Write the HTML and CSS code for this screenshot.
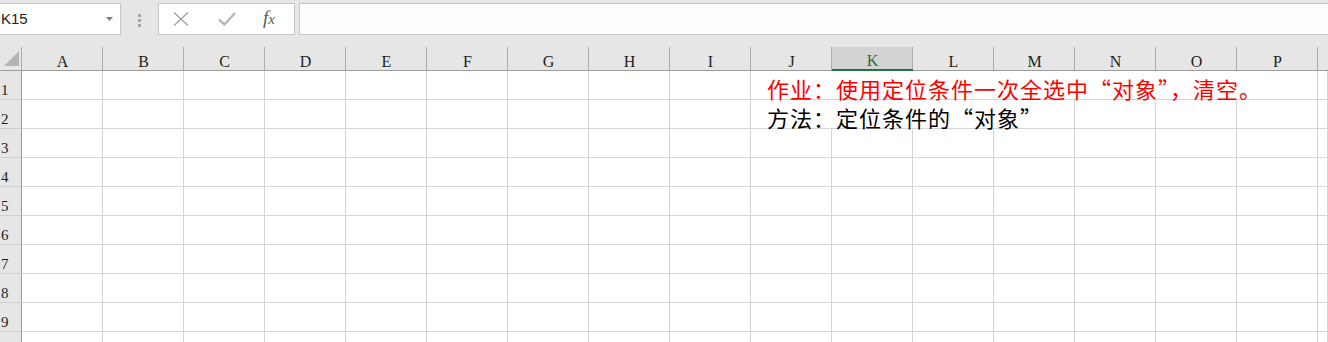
FILE: index.html
```html
<!DOCTYPE html>
<html lang="zh-CN">
<head>
    <meta charset="UTF-8">
    <title>Sheet1</title>
    <link rel="stylesheet" href="styles.css">
</head>
<body>
    <div class="toolbar">
        <div class="namebox">
            <span>K15</span>
            <svg class="drop" width="7" height="4" viewBox="0 0 7 4"><path d="M0 0h7L3.5 4z" fill="#7a7a7a"/></svg>
        </div>
        <div class="grip">
            <svg width="3" height="13" viewBox="0 0 3 13"><rect y="0" width="3" height="3" fill="#a6a6a6"/><rect y="5" width="3" height="3" fill="#a6a6a6"/><rect y="10" width="3" height="3" fill="#a6a6a6"/></svg>
        </div>
        <div class="fbuttons">
            <svg class="cancel" width="16" height="14" viewBox="0 0 16 14"><path d="M1 0.5L15 13.5M15 0.5L1 13.5" stroke="#a3a3a3" stroke-width="1.4" fill="none"/></svg>
            <svg class="enter" width="18" height="14" viewBox="0 0 18 14"><path d="M1 7.5L6.5 12.5L17 1" stroke="#b9b9b9" stroke-width="2.4" fill="none"/></svg>
            <span class="fx">f<i>x</i></span>
        </div>
        <div class="formula"></div>
    </div>

    <div class="sheet">
        <!-- заголовки столбцов -->
        <div class="corner">
            <svg width="15" height="15" viewBox="0 0 15 15"><path d="M15 0V15H0z" fill="#b5b5b5"/></svg>
        </div>
        <div class="hd">A</div>
        <div class="hd">B</div>
        <div class="hd">C</div>
        <div class="hd">D</div>
        <div class="hd">E</div>
        <div class="hd">F</div>
        <div class="hd">G</div>
        <div class="hd">H</div>
        <div class="hd">I</div>
        <div class="hd">J</div>
        <div class="hd sel">K</div>
        <div class="hd">L</div>
        <div class="hd">M</div>
        <div class="hd">N</div>
        <div class="hd">O</div>
        <div class="hd">P</div>
        <div class="hd last"></div>

        <!-- строка 1 -->
        <div class="rh">1</div>
        <div class="c"></div><div class="c"></div><div class="c"></div><div class="c"></div><div class="c"></div>
        <div class="c"></div><div class="c"></div><div class="c"></div><div class="c"></div>
        <div class="c txt red span7">作业：使用定位条件一次全选中“对象”，清空。</div>
        <div class="c"></div>

        <!-- строка 2 -->
        <div class="rh">2</div>
        <div class="c"></div><div class="c"></div><div class="c"></div><div class="c"></div><div class="c"></div>
        <div class="c"></div><div class="c"></div><div class="c"></div><div class="c"></div>
        <div class="c txt span4">方法：定位条件的“对象”</div>
        <div class="c"></div><div class="c"></div><div class="c"></div><div class="c"></div>

        <!-- строки 3-10 -->
        <div class="rh">3</div>
        <div class="c"></div><div class="c"></div><div class="c"></div><div class="c"></div><div class="c"></div><div class="c"></div><div class="c"></div><div class="c"></div>
        <div class="c"></div><div class="c"></div><div class="c"></div><div class="c"></div><div class="c"></div><div class="c"></div><div class="c"></div><div class="c"></div><div class="c"></div>

        <div class="rh">4</div>
        <div class="c"></div><div class="c"></div><div class="c"></div><div class="c"></div><div class="c"></div><div class="c"></div><div class="c"></div><div class="c"></div>
        <div class="c"></div><div class="c"></div><div class="c"></div><div class="c"></div><div class="c"></div><div class="c"></div><div class="c"></div><div class="c"></div><div class="c"></div>

        <div class="rh">5</div>
        <div class="c"></div><div class="c"></div><div class="c"></div><div class="c"></div><div class="c"></div><div class="c"></div><div class="c"></div><div class="c"></div>
        <div class="c"></div><div class="c"></div><div class="c"></div><div class="c"></div><div class="c"></div><div class="c"></div><div class="c"></div><div class="c"></div><div class="c"></div>

        <div class="rh">6</div>
        <div class="c"></div><div class="c"></div><div class="c"></div><div class="c"></div><div class="c"></div><div class="c"></div><div class="c"></div><div class="c"></div>
        <div class="c"></div><div class="c"></div><div class="c"></div><div class="c"></div><div class="c"></div><div class="c"></div><div class="c"></div><div class="c"></div><div class="c"></div>

        <div class="rh">7</div>
        <div class="c"></div><div class="c"></div><div class="c"></div><div class="c"></div><div class="c"></div><div class="c"></div><div class="c"></div><div class="c"></div>
        <div class="c"></div><div class="c"></div><div class="c"></div><div class="c"></div><div class="c"></div><div class="c"></div><div class="c"></div><div class="c"></div><div class="c"></div>

        <div class="rh">8</div>
        <div class="c"></div><div class="c"></div><div class="c"></div><div class="c"></div><div class="c"></div><div class="c"></div><div class="c"></div><div class="c"></div>
        <div class="c"></div><div class="c"></div><div class="c"></div><div class="c"></div><div class="c"></div><div class="c"></div><div class="c"></div><div class="c"></div><div class="c"></div>

        <div class="rh">9</div>
        <div class="c"></div><div class="c"></div><div class="c"></div><div class="c"></div><div class="c"></div><div class="c"></div><div class="c"></div><div class="c"></div>
        <div class="c"></div><div class="c"></div><div class="c"></div><div class="c"></div><div class="c"></div><div class="c"></div><div class="c"></div><div class="c"></div><div class="c"></div>

        <!-- строка 10 видна лишь краем, номер ниже кадра -->
        <div class="rh"></div>
        <div class="c"></div><div class="c"></div><div class="c"></div><div class="c"></div><div class="c"></div><div class="c"></div><div class="c"></div><div class="c"></div>
        <div class="c"></div><div class="c"></div><div class="c"></div><div class="c"></div><div class="c"></div><div class="c"></div><div class="c"></div><div class="c"></div><div class="c"></div>
    </div>
</body>
</html>
```

FILE: styles.css
```css
body {
    margin: 0;
    padding: 0;
    background-color: #ffffff;
    font-family: "Liberation Sans", Arial, sans-serif;
    overflow: hidden;
}
.toolbar {
    display: flex;
    height: 40px;
    padding-top: 3px;
    box-sizing: border-box;
    background-color: #e6e6e6;
}
.namebox, .fbuttons, .formula {
    height: 32px;
    box-sizing: border-box;
    background-color: #ffffff;
    border: 1px solid #c6c6c6;
}
.namebox {
    width: 121px;
    border-left: none;
    display: flex;
    align-items: center;
    justify-content: space-between;
    padding: 0 7px 2px 1px;
    font-size: 15px;
    color: #222;
}
.namebox .drop {
    margin-top: 1px;
}
.grip {
    width: 37px;
    display: flex;
    align-items: center;
    justify-content: center;
    padding-bottom: 3px;
    box-sizing: border-box;
}
.fbuttons {
    width: 137px;
    margin-right: 4px;
    display: flex;
    align-items: center;
    padding: 0 0 1px 14px;
}
.fbuttons .cancel {
    margin-right: 29px;
}
.fbuttons .enter {
    margin-right: 27px;
}
.fx {
    font-family: "Liberation Serif", serif;
    font-style: italic;
    font-size: 19px;
    color: #5a5a5a;
    margin-top: -2px;
}
.fx i {
    font-size: 15px;
}
.formula {
    flex: 1;
    border-right: none;
    background-color: #fdfdfd;
}
.sheet {
    display: grid;
    grid-template-columns: 22px repeat(16, 81px) 1fr;
    grid-template-rows: 31px repeat(10, 29px);
}
.corner, .hd {
    box-sizing: border-box;
    border-bottom: 1px solid #9c9c9c;
    background: linear-gradient(#ababab, #ababab) right 7px / 1px 100% no-repeat, #e6e6e6;
}
.corner {
    display: flex;
    align-items: flex-end;
    justify-content: flex-end;
    padding: 0 3px 4px 0;
}
.hd {
    display: flex;
    align-items: flex-end;
    justify-content: center;
    font-family: "Liberation Serif", serif;
    font-size: 16px;
    line-height: 17px;
    color: #1e1e1e;
}
.hd.sel {
    color: #217346;
    border-bottom: 2px solid #217346;
    background: linear-gradient(#ababab, #ababab) right 7px / 1px 100% no-repeat, linear-gradient(#d3d3d3, #d3d3d3) 0 7px / 100% 100% no-repeat, #e6e6e6;
}
.hd.last {
    background: #e6e6e6;
}
.rh {
    box-sizing: border-box;
    background-color: #e6e6e6;
    border-right: 1px solid #9c9c9c;
    border-bottom: 1px solid #cfcfcf;
    display: flex;
    align-items: flex-end;
    padding-left: 1px;
    font-family: "Liberation Serif", serif;
    font-size: 15px;
    line-height: 17px;
    color: #1e1e1e;
}
.c {
    box-sizing: border-box;
    border-right: 1px solid #d4d4d4;
    border-bottom: 1px solid #d4d4d4;
}
.txt {
    display: flex;
    align-items: flex-end;
    padding-left: 16px;
    white-space: nowrap;
    font-family: "Noto Sans CJK SC", sans-serif;
    font-size: 22px;
    line-height: 22px;
    letter-spacing: 1px;
    color: #000000;
}
.txt.red {
    color: #ff0000;
}
.span7 {
    grid-column: span 7;
}
.span4 {
    grid-column: span 4;
}
```
